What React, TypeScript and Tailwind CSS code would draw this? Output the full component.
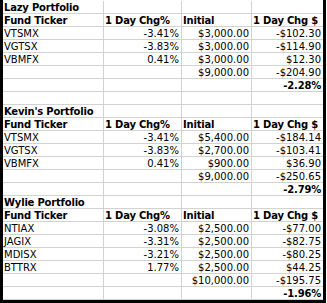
import React from 'react';

type Row = {
  kind: 'title' | 'header' | 'fund' | 'total' | 'pct' | 'blank';
  cells: string[];
};

const section = (
  title: string,
  funds: string[][],
  total: string[],
  pct: string,
  blank: boolean
): Row[] => {
  const rows: Row[] = [
    { kind: 'title', cells: [title, '', '', ''] },
    { kind: 'header', cells: ['Fund Ticker', '1 Day Chg%', 'Initial', '1 Day Chg $'] },
    ...funds.map((f) => ({ kind: 'fund' as const, cells: f })),
    { kind: 'total', cells: ['', '', total[0], total[1]] },
    { kind: 'pct', cells: ['', '', '', pct] },
  ];
  if (blank) rows.push({ kind: 'blank', cells: ['', '', '', ''] });
  return rows;
};

const rows: Row[] = [
  ...section(
    'Lazy Portfolio',
    [
      ['VTSMX', '-3.41%', '$3,000.00', '-$102.30'],
      ['VGTSX', '-3.83%', '$3,000.00', '-$114.90'],
      ['VBMFX', '0.41%', '$3,000.00', '$12.30'],
    ],
    ['$9,000.00', '-$204.90'],
    '-2.28%',
    true
  ),
  ...section(
    "Kevin's Portfolio",
    [
      ['VTSMX', '-3.41%', '$5,400.00', '-$184.14'],
      ['VGTSX', '-3.83%', '$2,700.00', '-$103.41'],
      ['VBMFX', '0.41%', '$900.00', '$36.90'],
    ],
    ['$9,000.00', '-$250.65'],
    '-2.79%',
    false
  ),
  ...section(
    'Wylie Portfolio',
    [
      ['NTIAX', '-3.08%', '$2,500.00', '-$77.00'],
      ['JAGIX', '-3.31%', '$2,500.00', '-$82.75'],
      ['MDISX', '-3.21%', '$2,500.00', '-$80.25'],
      ['BTTRX', '1.77%', '$2,500.00', '$44.25'],
    ],
    ['$10,000.00', '-$195.75'],
    '-1.96%',
    false
  ),
];

export default function App() {
  return (
    <div
      className="w-[327px] h-[303px] bg-white text-black text-[10px] overflow-hidden"
      style={{ fontFamily: '"DejaVu Sans", Verdana, sans-serif' }}
    >
      <div className="w-[326px] border-l-[3px] border-r-[3px] border-b-[3px] border-black pt-[1px]">
        {rows.map((row, i) => {
          const bold = row.kind === 'title' || row.kind === 'header';
          return (
            <div key={i} className="grid grid-cols-[101px_78px_70px_71px] h-[13px]">
              {row.cells.map((c, j) => {
                const left = j === 0 || bold;
                const isPct = row.kind === 'pct' && j === 3;
                return (
                  <div
                    key={j}
                    className={`h-[13px] leading-[14px] border-b border-[#d2d2d2] whitespace-nowrap ${
                      j < 3 ? 'border-r' : ''
                    } ${left ? 'text-left pl-[1px]' : 'text-right pr-[2px]'} ${
                      bold || isPct ? 'font-bold tracking-[-0.2px]' : ''
                    }`}
                  >
                    {c}
                  </div>
                );
              })}
            </div>
          );
        })}
      </div>
    </div>
  );
}
